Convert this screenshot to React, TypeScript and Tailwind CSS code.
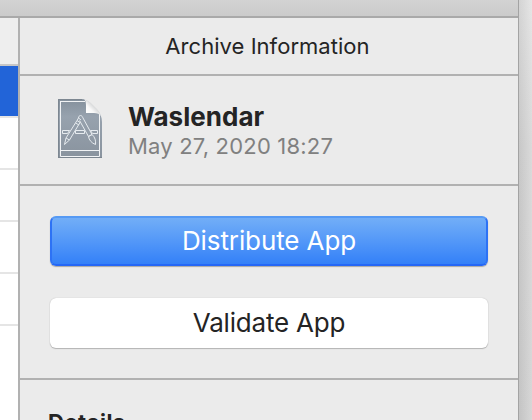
function ArchiveIcon() {
  return (
    <svg width="50" height="66" viewBox="0 0 50 66" fill="none" className="shrink-0">
      <defs>
        <linearGradient id="paper" x1="0" y1="0" x2="0" y2="1">
          <stop offset="0" stopColor="#84909c" />
          <stop offset="0.3" stopColor="#97a2ae" />
          <stop offset="1" stopColor="#89939e" />
        </linearGradient>
        <linearGradient id="fold" x1="31" y1="17" x2="38" y2="10" gradientUnits="userSpaceOnUse">
          <stop offset="0" stopColor="#ffffff" />
          <stop offset="0.6" stopColor="#f8f8f8" />
          <stop offset="1" stopColor="#dcddde" />
        </linearGradient>
      </defs>
      <path d="M3 3H26C30 3 33 5 36 8L42 14C45 17 47 21 47 26V62H3Z" fill="url(#paper)" />
      <path d="M3.5 62V3.5H27" stroke="#7d8791" />
      <path d="M3 61.5H47" stroke="#7b858f" />
      <path d="M5.500 5.500H30M5.500 5V60.500H44.500V18" stroke="#f1f3f5" />
      <path d="M6 54.500H44" stroke="#f1f3f5" />
      <path d="M29 3.500C31.500 5 31 10 31 17H39C42 17 44.500 18 46 20C45 16 43 14 40 11L36 7C34 5 32 4 29 3.500Z" fill="url(#fold)" />
      <g stroke="#e6ebef" strokeWidth="1" strokeLinejoin="round">
        <path d="M7.500 34.500H14.500L12.500 37.500H7.500ZM20.500 34.500H29.500V37.500H20.500ZM35.500 34.500H42.500V37.500H37.500Z" />
        <path d="M22 24.500L25 26.500L14.500 44L9.500 48.500L11 42Z" />
        <path d="M20.500 27L24 29M11 42L14.500 44M22 24.500L23.500 22L26 24" />
        <path d="M23.500 22C23.500 20.500 24.500 19.500 25.500 19.500C27 19.500 27.500 21 28 22L37 38.500L33.500 40.500L24.500 24.500" />
        <path d="M33.500 40.500L37 38.500C40 41 41 45 40.500 48.500C36.500 47 34 44 33.500 40.500Z" />
      </g>
    </svg>
  );
}

function Sidebar() {
  return (
    <div className="flex w-5 shrink-0 flex-col border-r-2 border-[#b1b1b1] bg-white">
      <div className="h-12 shrink-0 border-b-2 border-[#c6c6c6] bg-[#eeeeee]" />
      <div className="h-[52px] shrink-0 border-b-2 border-[#e5e5e5] bg-[#2264d8]" />
      <div className="h-[52px] shrink-0 border-b-2 border-[#e5e5e5]" />
      <div className="h-[52px] shrink-0 border-b-2 border-[#e5e5e5]" />
      <div className="h-[52px] shrink-0 border-b-2 border-[#e5e5e5]" />
      <div className="h-[52px] shrink-0 border-b-2 border-[#e5e5e5]" />
    </div>
  );
}

export default function App() {
  return (
    <div className="flex h-[420px] w-[532px] overflow-hidden bg-[#ebebeb] font-['Inter','Liberation_Sans',sans-serif] text-[#242424]">
      <div className="flex w-[518px] shrink-0 flex-col">
        <div className="h-[18px] shrink-0 border-b-2 border-[#a9a9a9] bg-linear-to-b from-[#d3d3d3] to-[#cbcbcb]" />
        <div className="flex min-h-0 flex-1">
          <Sidebar />
          <div className="flex min-w-0 flex-1 flex-col">
            <div className="flex h-[58px] shrink-0 justify-center border-b-2 border-[#b1b1b1] pt-[14px] pr-[3px]">
              <h1 className="text-[22px] leading-7 tracking-[0.04px] whitespace-nowrap">Archive Information</h1>
            </div>
            <div className="flex h-[110px] shrink-0 border-b-2 border-[#b1b1b1] pt-5 pl-[35px]">
              <ArchiveIcon />
              <div className="flex flex-col pt-[5px] pl-[23px]">
                <h2 className="text-[26px] leading-8 font-bold tracking-[0.02px] whitespace-nowrap">Waslendar</h2>
                <p className="-mt-px text-[22px] leading-7 tracking-[0.19px] whitespace-nowrap text-[#808080]">May 27, 2020 18:27</p>
              </div>
            </div>
            <div className="flex h-[194px] shrink-0 flex-col gap-8 border-b-2 border-[#b1b1b1] px-[30px] pt-[30px]">
              <button className="flex h-[50px] shrink-0 justify-center rounded-[6px] border-2 border-t-[#569af4] border-r-[#2d72f5] border-b-[#2467f6] border-l-[#2d72f5] bg-linear-to-b from-[#72aef7] to-[#3380f8] pt-[7px] text-[26px] leading-8 tracking-[-0.1px] whitespace-nowrap text-white shadow-[0_1px_1px_#a7a7a7]">Distribute App</button>
              <button className="flex h-[50px] shrink-0 justify-center rounded-[6px] bg-white pt-[9px] text-[26px] leading-8 tracking-[-0.2px] whitespace-nowrap shadow-[0_0_1px_#aaaaaa,0_1px_1px_#b5b5b5]">Validate App</button>
            </div>
            <div className="pt-[28px] pl-7">
              <h3 className="text-[22px] leading-7 font-bold tracking-[0.5px]">Details</h3>
            </div>
          </div>
        </div>
      </div>
      <div className="flex-1 border-l border-[#a3a3a3] bg-[linear-gradient(to_right,#00000010,#ffffff20),linear-gradient(to_bottom,#e2e2e2,#d5d5d5_35%,#d1d1d1)]" />
    </div>
  );
}
